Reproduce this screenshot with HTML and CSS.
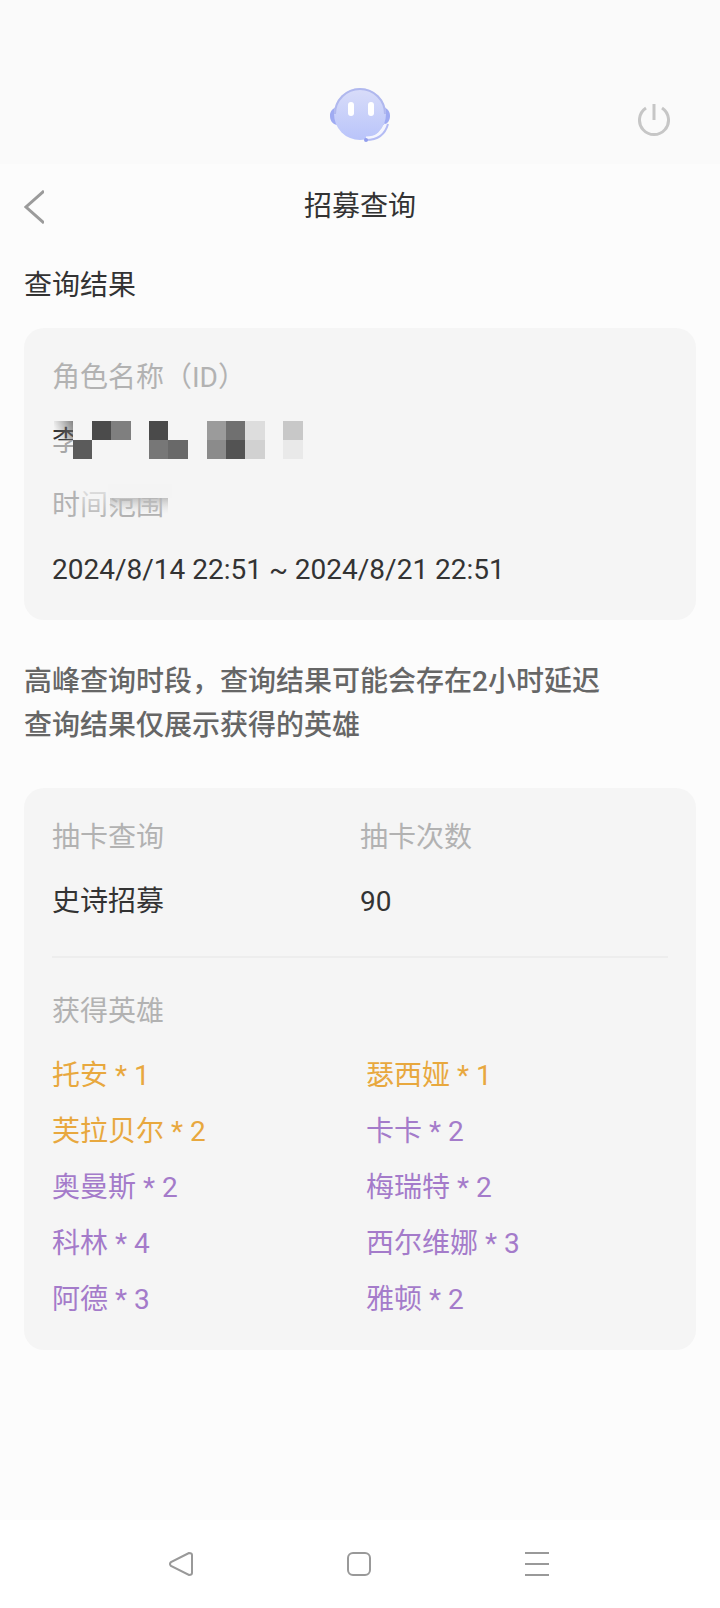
FILE: index.html
```html
<!DOCTYPE html>
<html lang="zh-CN">
<head>
    <meta charset="UTF-8">
    <meta name="viewport" content="width=device-width, initial-scale=1.0">
    <title>招募查询</title>
    <link rel="stylesheet" href="styles.css">
</head>
<body>

    <!-- Top bar -->
    <header class="topbar">
        <svg class="robot" width="60" height="56" viewBox="0 0 60 56" aria-hidden="true">
            <defs>
                <linearGradient id="face" x1="0" y1="0" x2="0" y2="1">
                    <stop offset="0" stop-color="#d9ddf9"/>
                    <stop offset="1" stop-color="#b9c4fa"/>
                </linearGradient>
            </defs>
            <path d="M7 19C1 23 0 25 0 29s2 8 7 9zM53 19c6 4 7 6 7 10s-2 8-7 9z" fill="#9fabf2"/>
            <circle cx="30" cy="27" r="26" fill="url(#face)"/>
            <path d="M5 27a25 25 0 0 1 50 0" fill="none" stroke="#b0b8ee" stroke-width="2"/>
            <path d="M56 37C53 46 46 51 36 51" fill="none" stroke="#f4f5fe" stroke-width="3"/>
            <path d="M58 37C55 48 47 53 36 53" fill="none" stroke="#b4bcf4" stroke-width="2"/>
            <circle cx="36" cy="53" r="2" fill="#929eed"/>
            <rect x="18" y="15" width="6" height="14" rx="3" fill="#fff"/>
            <rect x="38" y="15" width="6" height="14" rx="3" fill="#fff"/>
        </svg>
        <button class="power" type="button" aria-label="退出">
            <svg width="32" height="34" viewBox="0 0 32 34">
                <path d="M8 5a14.5 14.5 0 1 0 16 0" fill="none" stroke="#c6c6c6" stroke-width="3"/>
                <path d="M16 1v16" stroke="#c6c6c6" stroke-width="3"/>
            </svg>
        </button>
    </header>

    <!-- Page title -->
    <div class="title-row">
        <button class="back" type="button" aria-label="返回">
            <svg width="20" height="34" viewBox="0 0 20 34">
                <path d="M20 1L2 17l18 16" fill="none" stroke="#9b9b9b" stroke-width="3"/>
            </svg>
        </button>
        <h1>招募查询</h1>
    </div>

    <main class="content">
        <h2>查询结果</h2>

        <!-- Role and time range -->
        <section class="card">
            <p class="label">角色名称（ID）</p>
            <p class="masked">李
                <svg class="mosaic" width="252" height="40" viewBox="0 0 252 40" shape-rendering="crispEdges" aria-hidden="true">
                    <defs>
                        <linearGradient id="shade" x1="0" y1="0.4" x2="1" y2="0">
                            <stop offset="0" stop-color="#777" stop-opacity="0"/>
                            <stop offset="1" stop-color="#666" stop-opacity="0.8"/>
                        </linearGradient>
                    </defs>
                    <path d="M0 20h21v20H0z" fill="#f5f5f5" opacity="0.6"/>
                    <path d="M21 0h20v40H21z" fill="#f5f5f5"/>
                    <path d="M2 1h19v19H2z" fill="url(#shade)"/>
                    <path d="M21 20h19v19H21z" fill="#5b5b5b"/>
                    <path d="M40 1h19v19H40z" fill="#4b4b4b"/>
                    <path d="M59 1h20v19H59z" fill="#7f7f7f"/>
                    <path d="M97 1h19v19H97z" fill="#4a4a4a"/>
                    <path d="M97 20h19v19H97z" fill="#777"/>
                    <path d="M116 20h20v19h-20z" fill="#696969"/>
                    <path d="M155 1h19v19h-19z" fill="#9b9b9b"/>
                    <path d="M174 1h19v19h-19z" fill="#707070"/>
                    <path d="M193 1h20v19h-20z" fill="#ddd"/>
                    <path d="M155 20h19v19h-19z" fill="#8b8b8b"/>
                    <path d="M174 20h19v19h-19z" fill="#535353"/>
                    <path d="M193 20h20v19h-20z" fill="#d1d1d1"/>
                    <path d="M231 1h20v19h-20z" fill="#c8c8c8"/>
                    <path d="M231 20h20v19h-20z" fill="#e9e9e9"/>
                </svg>
            </p>
            <p class="label masked">时间范围
                <svg class="mosaic" width="120" height="40" viewBox="0 0 120 40" aria-hidden="true">
                    <defs>
                        <linearGradient id="smear" x1="0" y1="0" x2="0" y2="1">
                            <stop offset="0" stop-color="#b4b4b4" stop-opacity="0.8"/>
                            <stop offset="1" stop-color="#ddd" stop-opacity="0"/>
                        </linearGradient>
                        <linearGradient id="fade" x1="0" y1="0" x2="0" y2="1">
                            <stop offset="0" stop-color="#f5f5f5" stop-opacity="0.8"/>
                            <stop offset="1" stop-color="#f5f5f5" stop-opacity="0"/>
                        </linearGradient>
                    </defs>
                    <path d="M28 0h28v36H28z" fill="url(#fade)"/>
                    <path d="M56 0h64v14H56z" fill="#f4f4f4"/>
                    <path d="M58 14h58v16H58z" fill="url(#smear)"/>
                </svg>
            </p>
            <p>2024/8/14 22:51 ~ 2024/8/21 22:51</p>
        </section>

        <p class="notice">高峰查询时段，查询结果可能会存在2小时延迟<br>查询结果仅展示获得的英雄</p>

        <!-- Recruit results -->
        <section class="card">
            <table class="summary">
                <thead>
                    <tr><th>抽卡查询</th><th>抽卡次数</th></tr>
                </thead>
                <tbody>
                    <tr><td>史诗招募</td><td>90</td></tr>
                </tbody>
            </table>
            <h3 class="label">获得英雄</h3>
            <ul class="heroes">
                <li class="gold">托安 * 1</li>
                <li class="gold">瑟西娅 * 1</li>
                <li class="gold">芙拉贝尔 * 2</li>
                <li>卡卡 * 2</li>
                <li>奥曼斯 * 2</li>
                <li>梅瑞特 * 2</li>
                <li>科林 * 4</li>
                <li>西尔维娜 * 3</li>
                <li>阿德 * 3</li>
                <li>雅顿 * 2</li>
            </ul>
        </section>
    </main>

    <!-- System navigation -->
    <nav class="system-nav">
        <button type="button" aria-label="后退">
            <svg width="24" height="24" viewBox="0 0 24 24">
                <path d="M20 1L2 10q-2 2 0 4l18 9q3 0 3-2V3q0-2-3-2z"/>
            </svg>
        </button>
        <button type="button" aria-label="主页">
            <svg width="24" height="24" viewBox="0 0 24 24">
                <rect x="1" y="1" width="22" height="22" rx="5"/>
            </svg>
        </button>
        <button type="button" aria-label="菜单">
            <svg width="24" height="24" viewBox="0 0 24 24">
                <path d="M0 1h24M0 12h24M0 23h24"/>
            </svg>
        </button>
    </nav>

</body>
</html>
```
FILE: styles.css
```css
* {
    box-sizing: border-box;
}
body {
    margin: 0;
    min-height: 100vh;
    display: flex;
    flex-direction: column;
    background-color: #fcfcfc;
    color: #333;
    font-family: Roboto, "Noto Sans CJK SC", sans-serif;
    font-size: 28px;
    line-height: 64px;
}
h1, h2, h3, p, ul {
    margin: 0;
    padding: 0;
    font-size: 28px;
    font-weight: normal;
}
button {
    display: flex;
    padding: 0;
    border: none;
    background: none;
    cursor: pointer;
}
.topbar {
    display: grid;
    grid-template-columns: 1fr auto 1fr;
    align-items: center;
    height: 164px;
    padding: 66px 50px 0;
    background-color: #fafafa;
}
.robot {
    grid-column: 2;
}
.power {
    justify-self: end;
    padding-top: 10px;
}
.title-row {
    display: grid;
    grid-template-columns: 1fr auto 1fr;
    align-items: center;
    height: 86px;
    padding: 0 24px;
}
.content {
    flex: 1;
    padding: 4px 24px 40px;
}
.content h2 {
    margin-bottom: 10px;
}
.card {
    padding: 18px 28px;
    border-radius: 20px;
    background-color: #f5f5f5;
}
.label {
    color: #b2b2b2;
}
.masked {
    position: relative;
}
/* Pixel blocks drawn over the private text */
.mosaic {
    position: absolute;
    left: 0;
    top: 10px;
}
.notice {
    margin: 40px 0;
    color: #666;
    font-weight: 500;
    line-height: 44px;
}
.summary {
    width: 100%;
    table-layout: fixed;
    border-collapse: collapse;
    margin-bottom: 22px;
}
.summary th, .summary td {
    padding: 0;
    text-align: left;
    font-weight: normal;
}
.summary th {
    color: #b2b2b2;
}
.summary td {
    padding-bottom: 22px;
    border-bottom: 2px solid #ededed;
}
.heroes {
    display: grid;
    grid-template-columns: 1fr 1fr;
    column-gap: 12px;
    padding: 4px 0;
    list-style: none;
    color: #a47bca;
    line-height: 56px;
}
.heroes .gold {
    color: #e8a83e;
}
.system-nav {
    display: flex;
    justify-content: center;
    align-items: center;
    gap: 154px;
    height: 88px;
    padding-right: 2px;
    background-color: #fff;
}
.system-nav svg {
    fill: none;
    stroke: #999;
    stroke-width: 2;
}
```
